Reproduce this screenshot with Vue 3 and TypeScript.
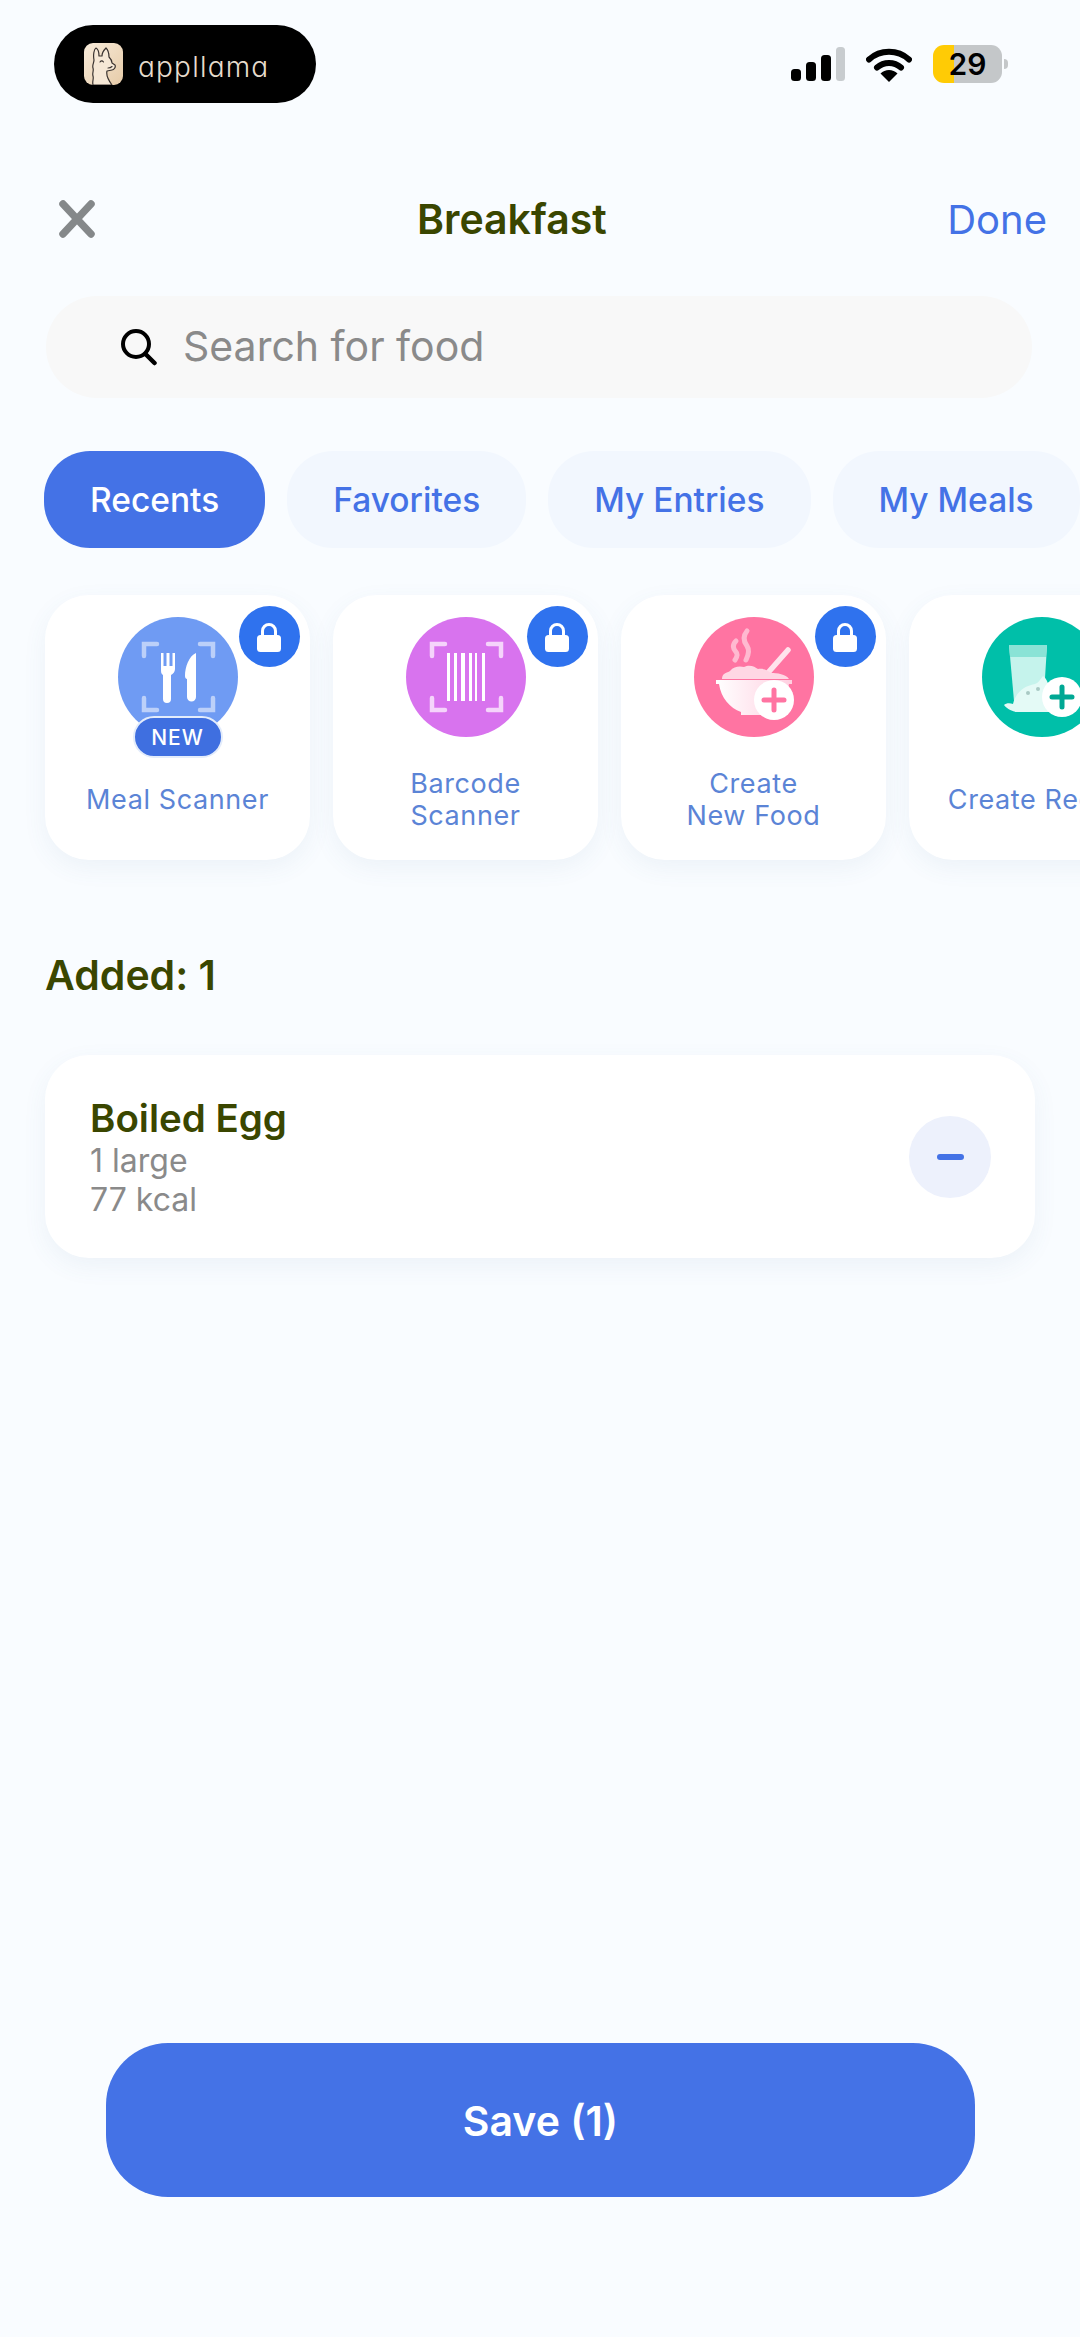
<script setup lang="ts">
// Add-food sheet: "Breakfast" meal with one item added
interface Tool {
  key: string;
  lines: string[];
  locked: boolean;
}

const tabs = ['Recents', 'Favorites', 'My Entries', 'My Meals'];

const tools: Tool[] = [
  { key: 'meal', lines: ['Meal Scanner'], locked: true },
  { key: 'barcode', lines: ['Barcode', 'Scanner'], locked: true },
  { key: 'food', lines: ['Create', 'New Food'], locked: true },
  { key: 'recipe', lines: ['Create Recipe'], locked: false },
];

const corners = 'M26 39V27h13M82 27h13v12M26 81v12h13M82 93h13V81';
</script>

<template>
  <div class="page">
    <div class="status">
      <div class="brand">
        <svg class="llama" viewBox="0 0 39 42">
          <defs>
            <linearGradient id="llamaBg" x1="0" y1="0" x2="1" y2="1">
              <stop offset="0" stop-color="#f8ebda" />
              <stop offset="1" stop-color="#e6cba8" />
            </linearGradient>
          </defs>
          <rect width="39" height="42" rx="9" fill="url(#llamaBg)" />
          <path d="M9 42C8 38 10 36 9 33 8 30 10 28 9 25 8 22 10 20 10 17 9 12 10 6 12 5 14 6 15 9 15 13L18 13C18 10 20 7 22 5 24 7 25 10 25 14 27 16 28 18 28 20L31 22C32 24 30 27 28 27L23 28C22 32 25 38 28 42Z" fill="#f6e8d6" stroke="#3a3330" stroke-width="1.200" stroke-linejoin="round" />
          <path d="M16 19c1-1.500 2.500-1.500 3.500 0M24 25c1.500 0 3-.5 4-1.500" fill="none" stroke="#3a3330" stroke-width="1.100" stroke-linecap="round" />
        </svg>
        <span class="brand-name">appllama</span>
      </div>
      <div class="indicators">
        <svg class="signal" viewBox="0 0 54 34">
          <rect x="0" y="22" width="10" height="12" rx="3.500" fill="#000" />
          <rect x="15" y="15" width="10" height="19" rx="3.500" fill="#000" />
          <rect x="30" y="8" width="10" height="26" rx="3.500" fill="#000" />
          <rect x="45" y="0" width="9" height="34" rx="3.500" fill="#c8cccf" />
        </svg>
        <svg class="wifi" viewBox="0 0 46 35">
          <path d="M3 12.500a30 30 0 0 1 40 0" fill="none" stroke="#000" stroke-width="6" stroke-linecap="round" />
          <path d="M11 20.500a18 18 0 0 1 24 0" fill="none" stroke="#000" stroke-width="6" stroke-linecap="round" />
          <path d="M23 35l-8.500-8.500a12 12 0 0 1 17 0z" fill="#000" />
        </svg>
        <div class="battery">
          <div class="battery-body"><span class="battery-level">29</span></div>
          <div class="battery-nub"></div>
        </div>
      </div>
    </div>

    <header class="head">
      <svg class="close" viewBox="0 0 36 38">
        <path d="M4 4l28 30M32 4L4 34" fill="none" stroke="#85888a" stroke-width="7.500" stroke-linecap="round" />
      </svg>
      <h1 class="title">Breakfast</h1>
      <span class="done">Done</span>
    </header>

    <div class="search">
      <svg class="search-icon" viewBox="0 0 38 38">
        <circle cx="16" cy="16" r="13" fill="none" stroke="#000" stroke-width="4" />
        <path d="M25.500 26l9 9" fill="none" stroke="#000" stroke-width="4.500" stroke-linecap="round" />
      </svg>
      <span class="search-text">Search for food</span>
    </div>

    <nav class="tabs">
      <span v-for="(tab, i) in tabs" :key="tab" class="tab" :class="{ active: i === 0 }">{{ tab }}</span>
    </nav>

    <div class="tools">
      <div v-for="tool in tools" :key="tool.key" class="tool">
        <div class="tool-art">
          <svg class="tool-icon" viewBox="0 0 120 120">
            <template v-if="tool.key === 'meal'">
              <circle cx="60" cy="60" r="60" fill="#6f9bf3" />
              <path :d="corners" fill="none" stroke="#bcd0f9" stroke-width="4.500" stroke-linecap="round" />
              <path d="M43 36h2.500v13h3V36h3v13h3V36H57v16c0 3-2 5-4 6v24a4 4 0 0 1-8 0V58c-2-1-2-3-2-6z" fill="#fff" />
              <path d="M78 36v44a4.500 4.500 0 0 1-9 0V62c-1 0-2-1-2-3 0-9 4-20 11-23z" fill="#fff" />
            </template>
            <template v-else-if="tool.key === 'barcode'">
              <circle cx="60" cy="60" r="60" fill="#d873ee" />
              <path :d="corners" fill="none" stroke="#f5d4fb" stroke-width="4.500" stroke-linecap="round" />
              <path d="M41 36h3v48h-3zM48 36h3v48h-3zM55 36h4v48h-4zM63 36h3v48h-3zM69 36h2v48h-2zM76 36h3v48h-3z" fill="#fff" />
            </template>
            <template v-else-if="tool.key === 'food'">
              <defs>
                <linearGradient id="bowlFill" x1="0" y1="0" x2="1" y2="0">
                  <stop offset="0" stop-color="#ffffff" />
                  <stop offset="1" stop-color="#ffcfe0" />
                </linearGradient>
              </defs>
              <circle cx="60" cy="60" r="60" fill="#ff74a2" />
              <path d="M42 24c-4 4-3 8 0 11 2 2 1 5-1 8M53 14c-5 6-3 11 0 15 2 3 2 8-1 14" fill="none" stroke="#ffb9d0" stroke-width="5" stroke-linecap="round" />
              <path d="M72 58l22-25" fill="none" stroke="#ffe3ec" stroke-width="5.500" stroke-linecap="round" />
              <path d="M28 62c0-6 5-6 8-8 4-5 10-5 14-4 6-3 11 0 14 2 6-1 11 2 13 4 6 0 15 1 18 6z" fill="#ffd7e4" />
              <path d="M22 63h76v4h-3c-2 14-11 24-22 28v3H47v-3c-11-4-20-14-22-28h-3z" fill="url(#bowlFill)" />
              <circle cx="80" cy="83" r="20" fill="#fff" />
              <path d="M80 73v20M70 83h20" fill="none" stroke="#ff74a2" stroke-width="5" stroke-linecap="round" />
            </template>
            <template v-else>
              <circle cx="60" cy="60" r="60" fill="#00bfa9" />
              <path d="M27 28h38l-4 67H33z" fill="#c5f3ec" />
              <path d="M27 28h38l-1 12H28z" fill="#8ae3d6" />
              <path d="M22 88c2-2 6-2 9-1 2-10 10-18 22-20 3-1 5-4 8-8 3 2 5 6 6 11v25H36c-5 0-11-3-14-7z" fill="#e4faf6" />
              <circle cx="46" cy="76" r="2" fill="#a9c9c4" />
              <circle cx="56" cy="72" r="2" fill="#a9c9c4" />
              <circle cx="80" cy="80" r="20" fill="#fff" />
              <path d="M80 70v20M70 80h20" fill="none" stroke="#00a894" stroke-width="5" stroke-linecap="round" />
            </template>
          </svg>
          <span v-if="tool.key === 'meal'" class="badge">NEW</span>
          <span v-if="tool.locked" class="lock">
            <svg viewBox="0 0 24 30" class="lock-icon">
              <path d="M5.500 14V9a6.500 6.500 0 0 1 13 0v5" fill="none" stroke="#fff" stroke-width="3" />
              <rect x="0" y="13" width="24" height="17" rx="3.500" fill="#fff" />
            </svg>
          </span>
        </div>
        <div class="tool-label">
          <span v-for="line in tool.lines" :key="line">{{ line }}</span>
        </div>
      </div>
    </div>

    <h2 class="added">Added: 1</h2>

    <div class="item">
      <div class="item-text">
        <div class="item-name">Boiled Egg</div>
        <div class="item-meta">1 large</div>
        <div class="item-meta">77 kcal</div>
      </div>
      <button class="remove" aria-label="Remove"><span class="minus"></span></button>
    </div>

    <button class="save">Save (1)</button>
  </div>
</template>

<style>
html,
body {
  margin: 0;
  background: #f9fcff;
}
</style>

<style scoped>
.page {
  width: 1080px;
  height: 2337px;
  overflow: hidden;
  display: flex;
  flex-direction: column;
  background: #f9fcff;
  font-family: Inter, "Liberation Sans", sans-serif;
}

.status {
  display: flex;
  justify-content: space-between;
  align-items: center;
  height: 78px;
  margin-top: 25px;
  padding: 0 72px 0 54px;
  flex: none;
}
.brand {
  width: 262px;
  height: 78px;
  box-sizing: border-box;
  padding-left: 30px;
  display: flex;
  align-items: center;
  gap: 15px;
  background: #000;
  border-radius: 39px;
}
.llama {
  width: 39px;
  height: 42px;
}
.brand-name {
  font-size: 28px;
  font-weight: 300;
  font-feature-settings: "cv11" 1;
  color: #e6dccd;
  letter-spacing: 1.200px;
  position: relative;
  top: 3px;
}
.indicators {
  display: flex;
  align-items: center;
}
.signal {
  width: 54px;
  height: 34px;
}
.wifi {
  width: 46px;
  height: 35px;
  margin-left: 21px;
}
.battery {
  display: flex;
  align-items: center;
  margin-left: 21px;
}
.battery-body {
  width: 69px;
  height: 38px;
  border-radius: 11px;
  background: linear-gradient(90deg, #ffcb05 0 21px, #c4c7c9 21px);
  display: flex;
  align-items: center;
  justify-content: center;
}
.battery-level {
  font-size: 30px;
  font-weight: 600;
  color: #000;
}
.battery-nub {
  width: 4px;
  height: 10px;
  margin-left: 2px;
  background: #c4c7c9;
  border-radius: 0 4px 4px 0;
}

.head {
  display: flex;
  align-items: center;
  justify-content: space-between;
  height: 60px;
  margin-top: 86px;
  padding: 0 33px 0 59px;
  position: relative;
  flex: none;
}
.close {
  width: 36px;
  height: 38px;
}
.title {
  margin: 0;
  position: absolute;
  left: 417px;
  font-size: 41px;
  font-weight: 600;
  color: #3a4600;
}
.done {
  font-size: 40px;
  color: #4472e6;
}

.search {
  display: flex;
  align-items: center;
  height: 102px;
  margin: 47px 48px 0 46px;
  padding-left: 74px;
  background: #f8f8f8;
  border-radius: 51px;
  flex: none;
}
.search-icon {
  width: 38px;
  height: 38px;
}
.search-text {
  margin-left: 25px;
  font-size: 41px;
  line-height: 50px;
  margin-top: -2px;
  color: #8a8a8a;
}

.tabs {
  display: flex;
  gap: 22px;
  margin: 53px 0 0 44px;
  flex: none;
}
.tab {
  height: 97px;
  box-sizing: border-box;
  padding: 0 46px;
  display: flex;
  align-items: center;
  font-size: 33.500px;
  font-weight: 500;
  color: #4472e6;
  background: #f2f7fe;
  border-radius: 46px;
  white-space: nowrap;
}
.tab.active {
  color: #fff;
  background: #4472e6;
}

.tools {
  display: flex;
  gap: 23px;
  margin-top: 47px;
  padding-left: 45px;
  flex: none;
}
.tool {
  position: relative;
  width: 265px;
  height: 265px;
  flex: none;
  background: #fff;
  border-radius: 44px;
  box-shadow: 0 8px 24px rgba(70, 110, 150, 0.07);
  display: flex;
  flex-direction: column;
  align-items: center;
}
.tool-art {
  width: 120px;
  height: 120px;
  margin-top: 22px;
  position: relative;
}
.tool-icon {
  display: block;
  width: 120px;
  height: 120px;
}
.badge {
  position: absolute;
  left: 15px;
  top: 99px;
  width: 90px;
  height: 42px;
  box-sizing: border-box;
  border: 2px solid #e3ecfb;
  border-radius: 21px;
  background: #3f6fe0;
  color: #fff;
  font-size: 21px;
  font-weight: 500;
  letter-spacing: 1px;
  display: flex;
  align-items: center;
  justify-content: center;
}
.lock {
  position: absolute;
  left: 121px;
  top: -11px;
  width: 61px;
  height: 61px;
  border-radius: 50%;
  background: #2f72ee;
  display: flex;
  align-items: center;
  justify-content: center;
}
.lock-icon {
  width: 24px;
  height: 30px;
}
.tool-label {
  flex: 1;
  display: flex;
  flex-direction: column;
  align-items: center;
  justify-content: center;
  padding-top: 22px;
  padding-bottom: 20px;
  font-size: 27px;
  line-height: 32px;
  color: #5b84d6;
  letter-spacing: 0.6px;
  white-space: nowrap;
}

.added {
  margin: 92px 0 0 45px;
  font-size: 41px;
  line-height: 46px;
  font-weight: 600;
  color: #3a4600;
  flex: none;
}

.item {
  display: flex;
  align-items: center;
  justify-content: space-between;
  height: 203px;
  margin: 57px 45px 0;
  padding: 0 44px 0 45px;
  background: #fff;
  border-radius: 44px;
  box-shadow: 0 8px 24px rgba(70, 110, 150, 0.07);
  flex: none;
}
.item-name {
  font-size: 38.500px;
  line-height: 46px;
  font-weight: 600;
  color: #3a4600;
}
.item-meta {
  font-size: 32px;
  line-height: 39px;
  color: #8a8a8a;
}
.remove {
  width: 82px;
  height: 82px;
  padding: 0;
  border: none;
  border-radius: 50%;
  background: #edf1fc;
  display: flex;
  align-items: center;
  justify-content: center;
}
.minus {
  width: 27px;
  height: 6px;
  border-radius: 3px;
  background: #4472e6;
}

.save {
  width: 869px;
  height: 154px;
  margin: auto 0 140px 106px;
  padding: 2px 0 0;
  border: none;
  border-radius: 62px;
  background: #4472e6;
  color: #fff;
  font-family: inherit;
  font-size: 41px;
  font-weight: 600;
  flex: none;
}
</style>
